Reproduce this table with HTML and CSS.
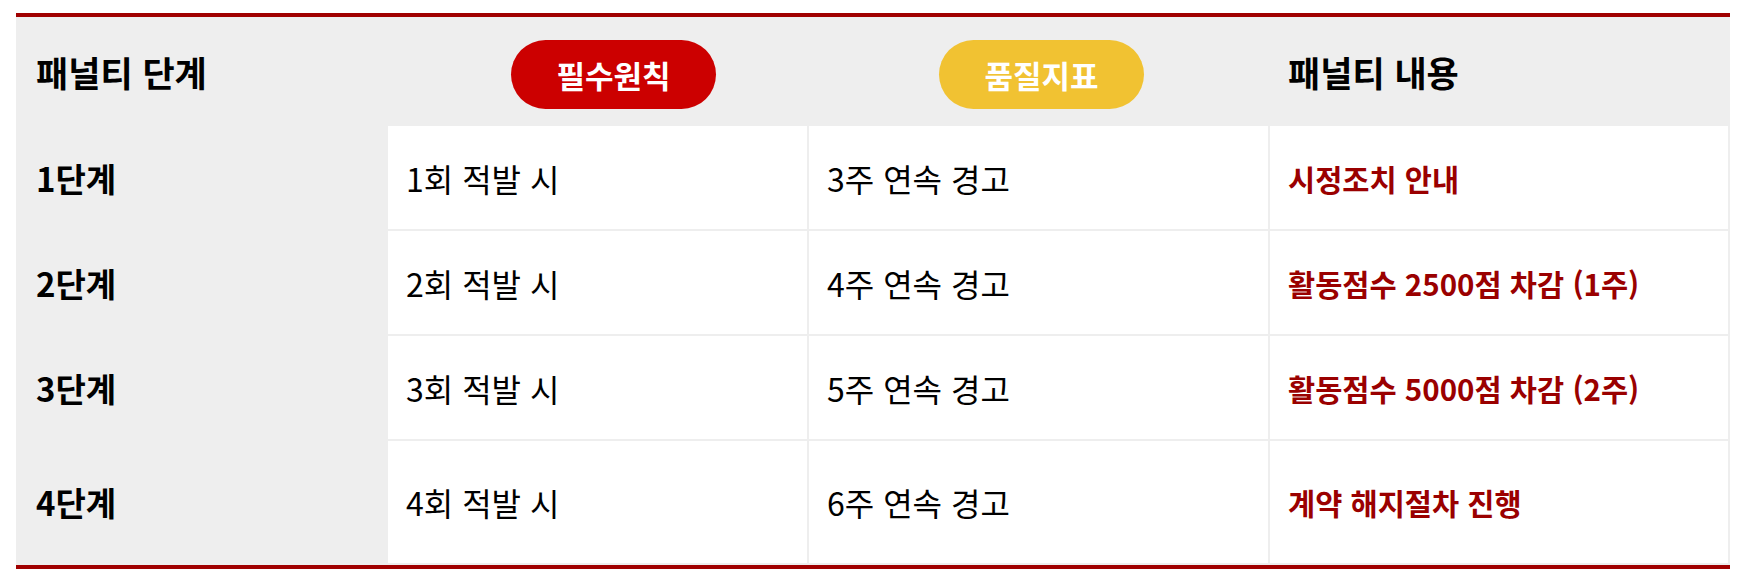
FILE: index.html
```html
<!DOCTYPE html>
<html lang="ko">
<head>
<meta charset="utf-8">
<title>패널티 단계</title>
<link rel="stylesheet" href="styles.css">
</head>
<body>
<div class="wrap">
  <table class="penalty">
    <colgroup>
      <col class="c-stage">
      <col class="c-rule">
      <col class="c-quality">
      <col class="c-content">
    </colgroup>
    <thead>
      <tr>
        <th class="th-left">패널티 단계</th>
        <th class="th-pill"><span class="pill pill-red">필수원칙</span></th>
        <th class="th-pill"><span class="pill pill-yellow">품질지표</span></th>
        <th class="th-left">패널티 내용</th>
      </tr>
    </thead>
    <tbody>
      <tr>
        <th class="stage">1단계</th>
        <td>1회 적발 시</td>
        <td>3주 연속 경고</td>
        <td class="result">시정조치 안내</td>
      </tr>
      <tr>
        <th class="stage">2단계</th>
        <td>2회 적발 시</td>
        <td>4주 연속 경고</td>
        <td class="result">활동점수 2500점 차감 (1주)</td>
      </tr>
      <tr>
        <th class="stage">3단계</th>
        <td>3회 적발 시</td>
        <td>5주 연속 경고</td>
        <td class="result">활동점수 5000점 차감 (2주)</td>
      </tr>
      <tr class="last">
        <th class="stage">4단계</th>
        <td>4회 적발 시</td>
        <td>6주 연속 경고</td>
        <td class="result">계약 해지절차 진행</td>
      </tr>
    </tbody>
  </table>
</div>
</body>
</html>
```

FILE: styles.css
```css
html, body {
  margin: 0;
  padding: 0;
  background: #ffffff;
}

body {
  font-family: "Noto Sans CJK KR", "Noto Sans", sans-serif;
  color: #000000;
}

.wrap {
  padding: 13px 10px 0 16px;
}

.penalty {
  width: 1714px;
  table-layout: fixed;
  border-collapse: separate;
  border-spacing: 2px;
  background: #eeeeee;
  border-top: 4px solid #a00000;
  border-bottom: 4px solid #a00000;
}

.c-stage { width: 368px; }
.c-rule { width: 419px; }
.c-quality { width: 459px; }
.c-content { width: 458px; }

.penalty thead th {
  height: 105px;
  padding: 0 18px;
  background: #eeeeee;
  font-size: 35px;
  font-weight: 700;
  vertical-align: middle;
}

.th-left {
  text-align: left;
}

.th-pill {
  text-align: center;
}

.pill {
  display: inline-block;
  height: 69px;
  line-height: 69px;
  padding: 0 45px;
  border-radius: 35px;
  color: #ffffff;
  font-size: 31px;
  font-weight: 700;
  margin-top: 6px;
}

.pill-red {
  background: #cc0000;
  margin-left: 32px;
}

.pill-yellow {
  background: #f1c232;
  margin-left: 6px;
}

.penalty tbody td,
.penalty tbody th {
  height: 103px;
  padding: 0 18px;
  font-size: 32px;
  vertical-align: middle;
  text-align: left;
}

.penalty tbody td {
  background: #ffffff;
  font-weight: 400;
}

.penalty tbody th.stage {
  background: #eeeeee;
  font-weight: 700;
  font-size: 33px;
}

.penalty tbody td.result {
  color: #9a0000;
  font-weight: 700;
  font-size: 29.5px;
}

.penalty tbody tr.last td,
.penalty tbody tr.last th {
  height: 122px;
}
```
